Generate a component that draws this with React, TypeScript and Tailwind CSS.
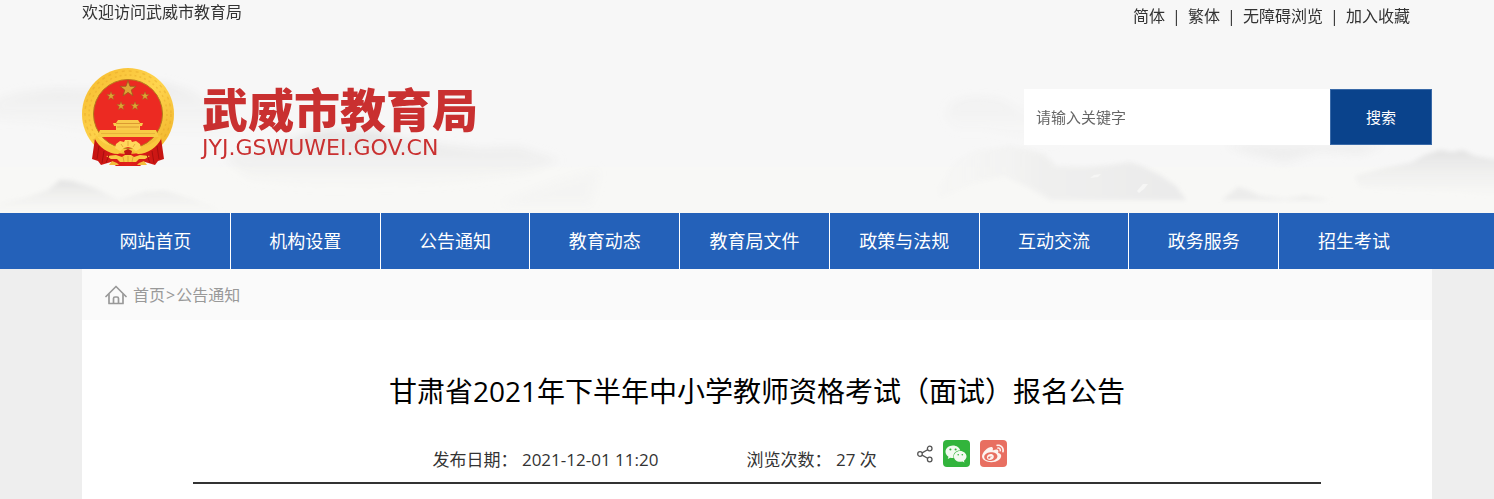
import React from "react";
import { FaWeibo, FaWeixin } from "react-icons/fa";

const topLinks = ["简体", "繁体", "无障碍浏览", "加入收藏"];

const navItems = [
  "网站首页",
  "机构设置",
  "公告通知",
  "教育动态",
  "教育局文件",
  "政策与法规",
  "互动交流",
  "政务服务",
  "招生考试",
];

const STAR =
  "M0 -10L2.35 -3.24L9.51 -3.09L3.8 1.24L5.88 8.09L0 4L-5.88 8.09L-3.8 1.24L-9.51 -3.09L-2.35 -3.24Z";

const smallStars = [
  { x: 29, y: 28 },
  { x: 63, y: 28 },
  { x: 39, y: 38 },
  { x: 53, y: 38 },
];

function Mountains() {
  return (
    <svg
      className="absolute inset-0 h-full w-full"
      viewBox="0 0 1494 213"
      preserveAspectRatio="xMidYMax slice"
      aria-hidden="true"
    >
      <defs>
        <linearGradient id="ink" x1="0" y1="0" x2="0" y2="1">
          <stop offset="0" stopColor="#dcdcdc" stopOpacity="0.75" />
          <stop offset="1" stopColor="#eeeeec" stopOpacity="0" />
        </linearGradient>
        <linearGradient id="paleInk" x1="0" y1="0" x2="0" y2="1">
          <stop offset="0" stopColor="#e4e4e4" stopOpacity="0.6" />
          <stop offset="1" stopColor="#f2f2f0" stopOpacity="0" />
        </linearGradient>
        <linearGradient id="ridge" x1="0" y1="0" x2="1" y2="0">
          <stop offset="0" stopColor="#f4f4f3" stopOpacity="0.3" />
          <stop offset="0.4" stopColor="#f0f0ef" />
          <stop offset="1" stopColor="#eaeaea" />
        </linearGradient>
        <filter id="soft" x="-10%" y="-20%" width="120%" height="140%">
          <feGaussianBlur stdDeviation="4" />
        </filter>
        <filter id="edge" x="-10%" y="-20%" width="120%" height="140%">
          <feGaussianBlur stdDeviation="2" />
        </filter>
      </defs>
      <rect y="167" width="1494" height="46" fill="#f8f8f6" />
      <g filter="url(#soft)">
        <path
          d="M-5 100L20 93L55 89L90 90L125 85L165 83L190 91L215 106L240 125L240 142L160 140L90 134L40 122L-5 120Z"
          fill="url(#paleInk)"
        />
        <path
          d="M225 158L255 150L285 142L310 134L332 130L352 132L375 131L400 139L440 145L480 149L520 148L560 160L530 172L440 185L330 190L250 180Z"
          fill="url(#ink)"
        />
        <path d="M500 204L535 190L560 181L598 170L595 186L590 204Z" fill="#f4f4f3" />
        <path
          d="M945 115L952 102L972 97L1000 99L1025 112L1050 122L1060 150L1020 140L985 130L955 130Z"
          fill="url(#paleInk)"
          opacity="0.5"
        />
        <path d="M1225 145L1385 145L1360 154L1320 151L1285 162L1250 154Z" fill="#eeeeee" />
      </g>
      <g filter="url(#edge)">
        <path
          d="M938 188L955 162L975 151L1010 146L1030 150L1045 154L1056 166L1085 167L1110 165L1130 162L1142 166L1160 175L1176 186L1186 200L1050 200L1030 188L1005 176L975 182L940 198Z"
          fill="url(#ridge)"
        />
        <path
          d="M-5 204L25 198L48 190L60 180L72 181L95 188L118 200L145 192L165 191L195 200L230 213L-5 213Z"
          fill="url(#ink)"
        />
        <path
          d="M1222 200L1232 192L1238 187L1248 190L1260 196L1285 199L1305 196L1330 200Z"
          fill="#ececeb"
        />
        <path
          d="M1355 176L1385 168L1410 163L1425 155L1440 150L1452 152L1463 150L1475 156L1499 160L1499 198L1455 192L1400 190L1360 188Z"
          fill="url(#ink)"
        />
      </g>
      <g fill="#f6f6f5">
        <path d="M1090 178L1094 175L1101 174L1098 177Z" />
        <path d="M1137 191L1143 184L1148 184L1144 189L1139 193Z" />
      </g>
    </svg>
  );
}

function Emblem() {
  return (
    <svg className="h-[98px] w-[92px] shrink-0" viewBox="0 0 92 98" aria-hidden="true">
      <defs>
        <linearGradient id="gold" x1="0" y1="0" x2="1" y2="1">
          <stop offset="0" stopColor="#f5b92c" />
          <stop offset="0.5" stopColor="#ffd54e" />
          <stop offset="1" stopColor="#eeae24" />
        </linearGradient>
        <linearGradient id="ribbon" x1="0" y1="0" x2="1" y2="0">
          <stop offset="0" stopColor="#c51412" />
          <stop offset="0.5" stopColor="#e2201a" />
          <stop offset="1" stopColor="#c51412" />
        </linearGradient>
      </defs>
      <circle cx="46" cy="46" r="46" fill="url(#gold)" />
      <g fill="none" stroke="#dd9c22" opacity="0.35">
        <circle cx="46" cy="46" r="43" strokeWidth="1.5" strokeDasharray="3 4" />
        <circle cx="46" cy="46" r="39" strokeWidth="1.5" strokeDasharray="2 3" />
      </g>
      <circle cx="46" cy="46" r="34.5" fill="#ec2a22" stroke="#b5771c" strokeWidth="1" />
      <g fill="#dda535" stroke="#a05a1c" strokeWidth="1">
        <path d={STAR} transform="translate(46 21) scale(0.85)" />
        {smallStars.map((star) => (
          <path
            key={`${star.x}-${star.y}`}
            d={STAR}
            transform={`translate(${star.x} ${star.y}) scale(0.46)`}
          />
        ))}
      </g>
      <path d="M36 52H56L58 55H61L60 58H58V62H34V58H32L31 55H34Z" fill="#f9cb4c" />
      <path d="M34 55.5H58M35 59H57" stroke="#d48d2c" strokeWidth="0.8" />
      <path d="M18 62H74L77 69H15Z" fill="#f8cb45" />
      <path d="M19 65.5H73" stroke="#e3a833" strokeWidth="0.7" />
      <path
        d="M13 70C21 82 33 86 46 86C59 86 71 82 79 70L82 91L76 93L73 97L63 94L58 98H34L29 94L19 97L16 93L10 91Z"
        fill="url(#ribbon)"
      />
      <path
        d="M14 67C19 75 27 79 38 79L43 82L36 86C26 86 17 79 13 71ZM78 67C73 75 65 79 54 79L49 82L56 86C66 86 75 79 79 71Z"
        fill="#f9c83d"
      />
      <path
        d="M34 76L38 73L42 74L43 72H49L50 74L54 73L58 76L59 80L54 83L50 80L46 79L42 80L38 83L33 80Z"
        fill="#ffd75b"
      />
      <path d="M39 76L41 79M46 73V78M53 76L51 79" stroke="#e0a032" strokeWidth="0.8" />
      <path d="M42 83L46 81L50 83L49 87H43Z" fill="#c01613" />
      <path
        d="M24 88L34 87L40 89L43 87H49L52 89L58 87L68 88L63 91H57L54 94H38L35 91H29Z"
        fill="#f8cb45"
      />
      <path d="M27 97L30 93L35 95L37 97ZM65 97L62 93L57 95L55 97Z" fill="#f3bd3a" />
      <path d="M46 88V94M41 89L42 94M51 89L50 94" stroke="#dc9c30" strokeWidth="0.8" />
      <path
        d="M17 78L15 91M22 83L20 95M27 87L24 95M75 78L77 91M70 83L72 95M65 87L68 95"
        stroke="#a80f0e"
        strokeWidth="1"
      />
    </svg>
  );
}

function HomeIcon() {
  return (
    <svg
      className="h-5 w-[22px]"
      viewBox="0 0 22 20"
      fill="none"
      stroke="#999999"
      strokeWidth="1.7"
      strokeLinecap="round"
      strokeLinejoin="round"
      aria-hidden="true"
    >
      <path d="M1 11.5L11 1.5L21 11.5" />
      <path d="M4 9.5V18.5H18V9.5" />
      <path d="M8.5 18V13.5Q8.5 12 10 12H12Q13.5 12 13.5 13.5V18" />
    </svg>
  );
}

function ShareIcon() {
  return (
    <svg
      className="h-[18px] w-4"
      viewBox="0 0 16 18"
      fill="none"
      stroke="#555555"
      strokeWidth="1.3"
      aria-hidden="true"
    >
      <circle cx="3" cy="9" r="2.3" />
      <circle cx="12.7" cy="3.5" r="2.3" />
      <circle cx="12.7" cy="14.5" r="2.3" />
      <path d="M5.1 7.9L10.6 4.7M5.1 10.1L10.6 13.3" />
    </svg>
  );
}

function Header() {
  return (
    <header className="relative bg-[#f7f7f7] pl-5">
      <Mountains />
      <div className="relative mx-auto h-[213px] max-w-[1350px]">
        <div className="flex h-[68px] items-start justify-between text-base leading-6 text-[#333333]">
          <p>欢迎访问武威市教育局</p>
          <ul className="mt-1 mr-[22px] flex">
            {topLinks.map((link, index) => (
              <li key={link} className="flex">
                {index > 0 && <span className="w-[23px] text-center">|</span>}
                <a href="#">{link}</a>
              </li>
            ))}
          </ul>
        </div>

        <div className="flex items-start justify-between">
          <a href="#" className="flex text-[#c93030]">
            <Emblem />
            <span className="ml-7 flex flex-col pt-4">
              <span className="font-['Liberation_Sans','Noto_Sans_CJK_SC',sans-serif] text-[46px] leading-[54px] font-black">
                武威市教育局
              </span>
              <span className="font-['DejaVu_Sans',sans-serif] text-[22px] leading-5">
                JYJ.GSWUWEI.GOV.CN
              </span>
            </span>
          </a>
          <form
            className="mt-[21px] flex h-14 w-[408px]"
            onSubmit={(event) => event.preventDefault()}
          >
            <input
              type="text"
              aria-label="请输入关键字"
              placeholder="请输入关键字"
              className="min-w-0 flex-1 bg-white px-3 text-[15px] placeholder:text-[#666666]"
            />
            <button
              type="submit"
              className="w-[102px] border border-[#3a6aa8] bg-[#0a438c] text-[15px] text-white"
            >
              搜索
            </button>
          </form>
        </div>
      </div>
    </header>
  );
}

function Nav() {
  return (
    <nav className="bg-[#2461b9] pl-[18px]">
      <ul className="mx-auto grid max-w-[1350px] grid-cols-9 pr-[2px]">
        {navItems.map((item) => (
          <li key={item} className="border-r border-white last:border-r-0">
            <a href="#" className="block text-center text-lg leading-[56px] text-white">
              {item}
            </a>
          </li>
        ))}
      </ul>
    </nav>
  );
}

function App() {
  return (
    <div className="min-h-screen overflow-hidden bg-[#eeeeee] font-['Open_Sans','Noto_Sans_CJK_SC',sans-serif]">
      <Header />
      <Nav />
      <main className="pl-5">
        <div className="mx-auto max-w-[1350px] bg-white">
          <div className="flex h-[51px] items-center bg-[#fafafa] pl-[23px] text-base text-[#999999]">
            <HomeIcon />
            <a href="#" className="ml-[6px]">
              首页
            </a>
            <span className="px-px">&gt;</span>
            <a href="#">公告通知</a>
          </div>

          <article className="min-h-[179px] px-[111px] pt-[50px]">
            <h1 className="text-center text-[28px] leading-[42px] text-black">
              甘肃省2021年下半年中小学教师资格考试（面试）报名公告
            </h1>
            <div className="mt-7 flex h-11 items-start justify-center border-b-2 border-[#333333] pr-[75px] text-[17px] text-[#333333]">
              <p className="mt-2 min-w-[314px] leading-6">
                发布日期： <time dateTime="2021-12-01T11:20">2021-12-01 11:20</time>
              </p>
              <p className="mt-2 min-w-[170px] leading-6">浏览次数： 27 次</p>
              <div className="flex items-center gap-[10px]">
                <button type="button" aria-label="分享">
                  <ShareIcon />
                </button>
                <button
                  type="button"
                  aria-label="微信"
                  className="flex size-[27px] items-center justify-center rounded-sm bg-[#32b43c] text-[#f2faf0]"
                >
                  <FaWeixin size={22} />
                </button>
                <button
                  type="button"
                  aria-label="微博"
                  className="flex size-[27px] items-center justify-center rounded-sm bg-[#e86f61] text-[#fdf3f0]"
                >
                  <FaWeibo size={22} />
                </button>
              </div>
            </div>
          </article>
        </div>
      </main>
    </div>
  );
}

export default App;
